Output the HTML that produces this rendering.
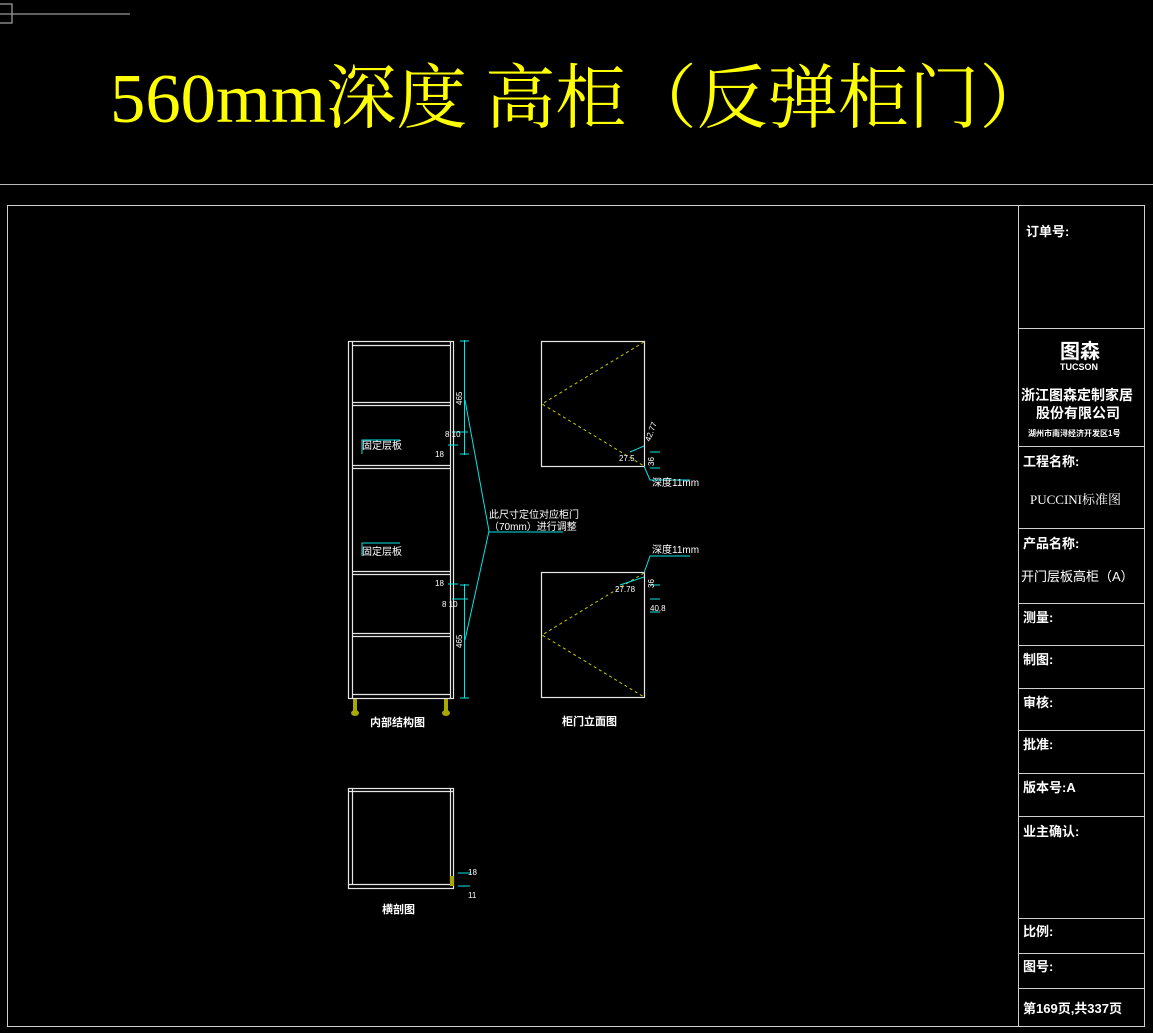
<!DOCTYPE html>
<html><head><meta charset="utf-8"><style>
html,body{margin:0;padding:0;background:#000;}
svg{display:block}
.w{fill:#fff;font-family:"Liberation Sans","Noto Sans CJK SC",sans-serif;font-weight:bold}
.s{fill:#fff;font-family:"Liberation Sans","Noto Sans CJK SC",sans-serif;font-size:10px}
</style></head><body>
<svg width="1153" height="1033" viewBox="0 0 1153 1033" xmlns="http://www.w3.org/2000/svg">
<rect width="1153" height="1033" fill="#000"/>
<!-- top-left marker -->
<g stroke="#9a9a9a" stroke-width="1.3" fill="none">
<rect x="-2" y="4" width="14" height="19"/>
<line x1="0" y1="14" x2="130" y2="14"/>
</g>
<text x="110" y="122" textLength="940" lengthAdjust="spacingAndGlyphs" fill="#ffff00" style="font-family:'Liberation Serif','Noto Serif CJK SC',serif;font-size:70px">560mm深度 高柜（反弹柜门）</text>
<line x1="0" y1="184.5" x2="1153" y2="184.5" stroke="#bbb" stroke-width="1"/>
<!-- frame -->
<g stroke="#cfcfcf" stroke-width="1" fill="none">
<rect x="7.5" y="205.5" width="1137" height="821"/>
<line x1="1018.5" y1="205" x2="1018.5" y2="1027"/>
<path d="M1018 328.5H1145M1018 446.5H1145M1018 528.5H1145M1018 603.5H1145M1018 645.5H1145M1018 688.5H1145M1018 730.5H1145M1018 773.5H1145M1018 816.5H1145M1018 918.5H1145M1018 953.5H1145M1018 988.5H1145"/>
</g>
<g class="w" font-size="13">
<text x="1026" y="236">订单号:</text>
<text x="1060" y="358" font-size="20">图森</text>
<text x="1060" y="370" font-size="9">TUCSON</text>
<text x="1021" y="400" font-size="14">浙江图森定制家居</text>
<text x="1036" y="418" font-size="14">股份有限公司</text>
<text x="1028" y="436" font-size="8">湖州市南浔经济开发区1号</text>
<text x="1023" y="466">工程名称:</text>
<text x="1030" y="504" style="font-family:'Liberation Serif','Noto Serif CJK SC',serif;font-weight:normal">PUCCINI标准图</text>
<text x="1023" y="548">产品名称:</text>
<text x="1021" y="581" style="font-weight:normal">开门层板高柜（A）</text>
<text x="1023" y="622">测量:</text>
<text x="1023" y="664">制图:</text>
<text x="1023" y="707">审核:</text>
<text x="1023" y="749">批准:</text>
<text x="1023" y="792">版本号:A</text>
<text x="1023" y="836">业主确认:</text>
<text x="1023" y="936">比例:</text>
<text x="1023" y="971">图号:</text>
<text x="1023" y="1013">第169页,共337页</text>
</g>
<!-- cabinet -->
<g stroke="#e6e6e6" stroke-width="1.2" fill="none">
<rect x="348.5" y="341.5" width="105" height="357"/>
<line x1="352.5" y1="342" x2="352.5" y2="698"/>
<line x1="450.5" y1="342" x2="450.5" y2="698"/>
<path d="M352 345.5H450M352 402.5H450M352 405.5H450M352 465.5H450M352 468.5H450M352 571.5H450M352 574.5H450M352 633.5H450M352 636.5H450M352 694.5H450"/>
<!-- section -->
<rect x="348.5" y="788.5" width="105" height="100"/>
<line x1="352.5" y1="789" x2="352.5" y2="884"/>
<line x1="450.5" y1="789" x2="450.5" y2="884"/>
<line x1="348" y1="791.5" x2="454" y2="791.5"/>
<line x1="348" y1="884.5" x2="454" y2="884.5"/>
<!-- doors -->
<rect x="541.5" y="341.5" width="103" height="125"/>
<rect x="541.5" y="572.5" width="103" height="125"/>
</g>
<!-- feet -->
<g fill="#a8a800">
<rect x="353" y="699" width="4" height="12"/><ellipse cx="355" cy="713" rx="4" ry="3"/>
<rect x="444" y="699" width="4" height="12"/><ellipse cx="446" cy="713" rx="4" ry="3"/>
<rect x="450" y="876" width="4" height="10"/>
</g>
<!-- dashed hinge lines -->
<g stroke="#c8c800" stroke-width="1" stroke-dasharray="3,3" fill="none">
<path d="M644 342L542 404L644 466"/>
<path d="M644 573L542 635L644 697"/>
</g>
<!-- cyan dims -->
<g stroke="#00e5e5" stroke-width="1" fill="none">
<line x1="464.5" y1="340" x2="464.5" y2="455"/>
<line x1="464.5" y1="584" x2="464.5" y2="698"/>
<path d="M460 341H469M460 454H469M460 585H469M460 698H469"/>
<path d="M465 400L489 531L465 640"/>
<line x1="489" y1="532" x2="563" y2="532"/>
<path d="M362 454V440H400M362 556V543H400"/>
<path d="M452 432H468M448 445H458M452 599H468M448 584H458"/>
<path d="M644 466L650 480H690M644 573L650 556H690"/>
<path d="M650 452H660M650 468H660M650 585H660M650 599H660M650 612H660"/>
<path d="M630 452L644 446M620 585L644 577"/>
<path d="M458 873H470M458 886H470"/>
</g>
<g class="s">
<text x="362" y="449">固定层板</text>
<text x="362" y="555">固定层板</text>
<text x="489" y="518">此尺寸定位对应柜门</text>
<text x="489" y="530">（70mm）进行调整</text>
<text x="652" y="486">深度11mm</text>
<text x="652" y="553">深度11mm</text>
<text x="370" y="726" font-size="11" font-weight="bold">内部结构图</text>
<text x="562" y="725" font-size="11" font-weight="bold">柜门立面图</text>
<text x="382" y="913" font-size="11" font-weight="bold">横剖图</text>
<text x="445" y="437" font-size="8">8 10</text>
<text x="435" y="457" font-size="8">18</text>
<text x="435" y="586" font-size="8">18</text>
<text x="442" y="607" font-size="8">8 10</text>
<text x="619" y="461" font-size="8">27.5</text>
<text x="650" y="611" font-size="8">40.8</text>
<text x="615" y="592" font-size="8">27.78</text>
<text x="468" y="875" font-size="8">18</text>
<text x="468" y="898" font-size="8">11</text>
<text transform="translate(462,405) rotate(-90)" font-size="8">465</text>
<text transform="translate(462,648) rotate(-90)" font-size="8">465</text>
<text transform="translate(654,466) rotate(-90)" font-size="8">36</text>
<text transform="translate(654,588) rotate(-90)" font-size="8">36</text>
<text transform="translate(650,442) rotate(-70)" font-size="8">42.77</text>
</g>
</svg>
</body></html>
